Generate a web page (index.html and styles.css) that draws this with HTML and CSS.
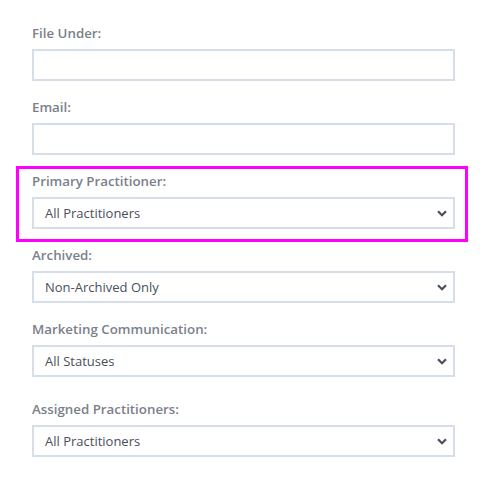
FILE: index.html
```html
<!DOCTYPE html>
<html>
<head>
<meta charset="utf-8">
<link rel="stylesheet" href="styles.css">
</head>
<body>
<form class="form">
  <div class="field">
    <label class="label">File Under:</label>
    <div class="input"></div>
  </div>
  <div class="field">
    <label class="label">Email:</label>
    <div class="input"></div>
  </div>
  <div class="field highlighted">
    <label class="label">Primary Practitioner:</label>
    <div class="input select"><span>All Practitioners</span><svg class="chev" width="10" height="7" viewBox="0 0 10 7"><path d="M1 1.2 L5 5.2 L9 1.2" fill="none" stroke="#4a4f5b" stroke-width="2.2"/></svg></div>
  </div>
  <div class="field">
    <label class="label">Archived:</label>
    <div class="input select"><span>Non-Archived Only</span><svg class="chev" width="10" height="7" viewBox="0 0 10 7"><path d="M1 1.2 L5 5.2 L9 1.2" fill="none" stroke="#4a4f5b" stroke-width="2.2"/></svg></div>
  </div>
  <div class="field field-wide">
    <label class="label">Marketing Communication:</label>
    <div class="input select"><span>All Statuses</span><svg class="chev" width="10" height="7" viewBox="0 0 10 7"><path d="M1 1.2 L5 5.2 L9 1.2" fill="none" stroke="#4a4f5b" stroke-width="2.2"/></svg></div>
  </div>
  <div class="field">
    <label class="label">Assigned Practitioners:</label>
    <div class="input select"><span>All Practitioners</span><svg class="chev" width="10" height="7" viewBox="0 0 10 7"><path d="M1 1.2 L5 5.2 L9 1.2" fill="none" stroke="#4a4f5b" stroke-width="2.2"/></svg></div>
  </div>
</form>
</body>
</html>
```
FILE: styles.css
```css
html, body {
  margin: 0;
  background: #ffffff;
}
.form {
  padding: 24px 0 0 32px;
  width: 423px;
  font-family: "Open Sans", sans-serif;
}
.field {
  position: relative;
  margin-bottom: 17px;
}
.field-wide {
  margin-bottom: 23px;
}
.label {
  display: block;
  font-size: 13.3px;
  line-height: 18px;
  font-weight: 600;
  color: #7b808b;
  margin-bottom: 7px;
}
.input {
  box-sizing: border-box;
  height: 32px;
  border: 2px solid #d6deea;
  background: #fff;
}
.select {
  display: flex;
  align-items: center;
  justify-content: space-between;
  padding: 0 6px 0 11px;
  font-size: 13px;
  color: #4a4f5b;
}
.chev {
  display: block;
  margin-top: 1px;
}
.highlighted::after {
  content: "";
  position: absolute;
  top: -6px;
  left: -16px;
  right: -13px;
  bottom: -13px;
  border: 3px solid #ff00ff;
  pointer-events: none;
}
```
